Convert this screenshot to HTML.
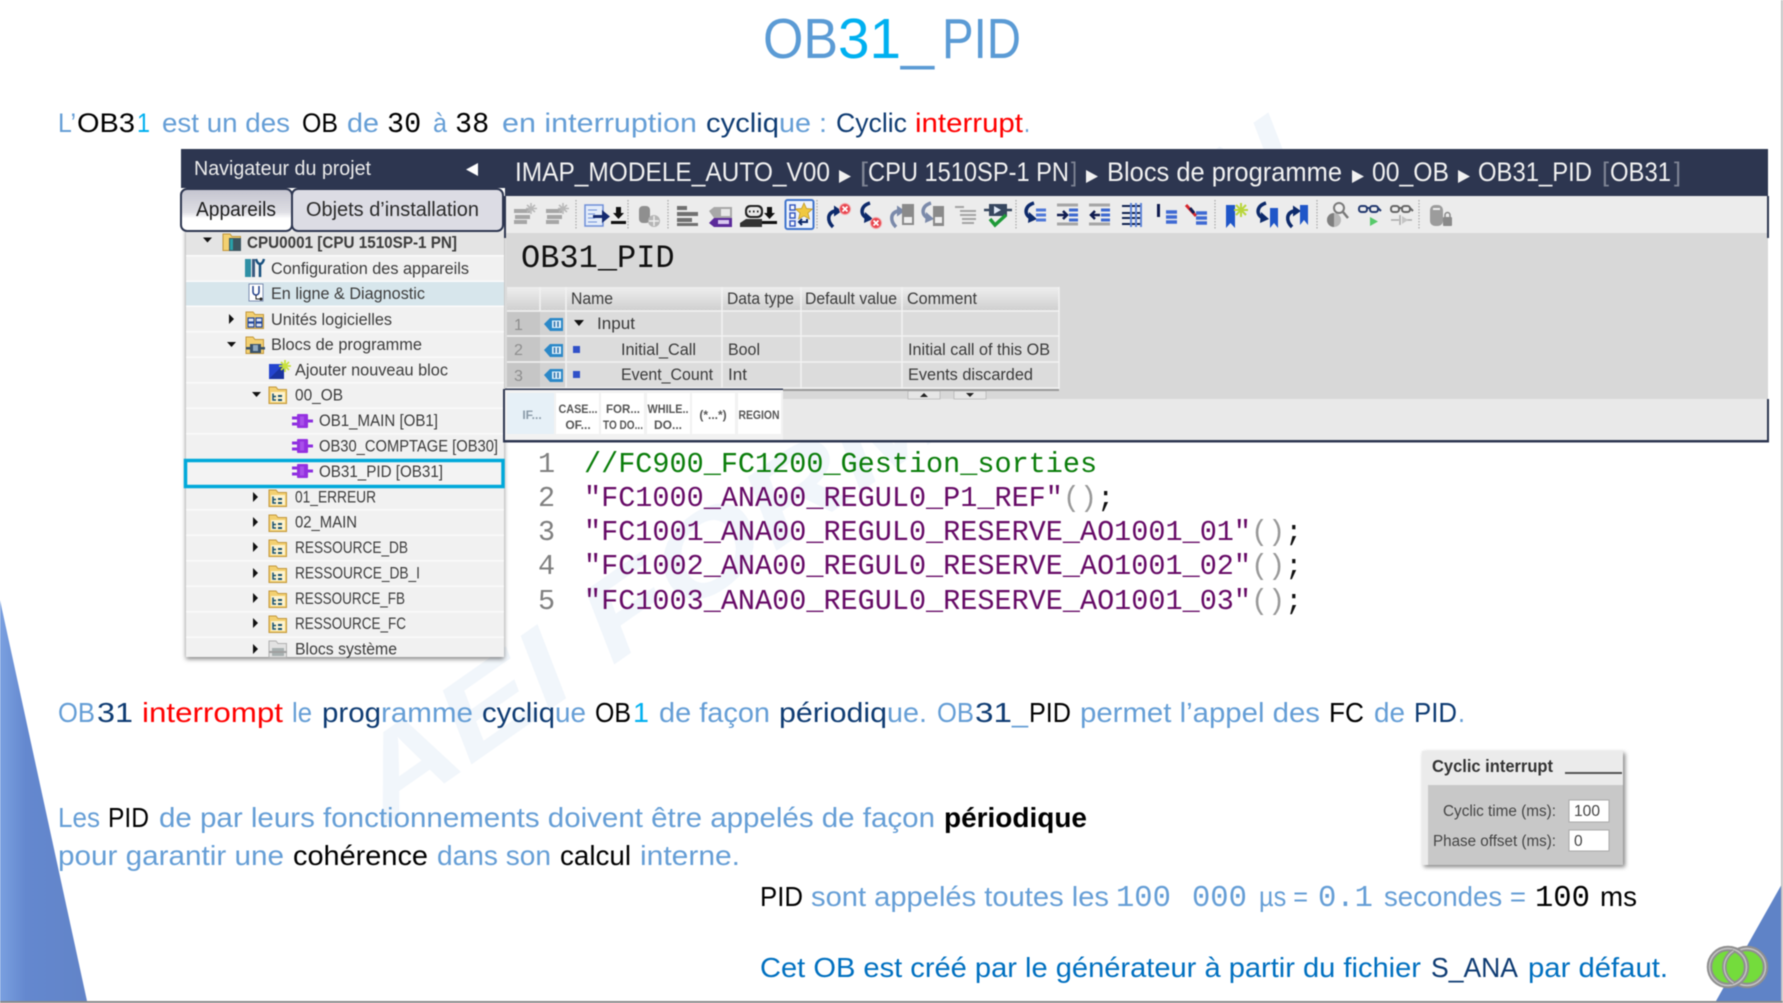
<!DOCTYPE html>
<html lang="fr"><head><meta charset="utf-8"><title>OB31_PID</title>
<style>
html,body{margin:0;padding:0;background:#fff;width:1783px;height:1003px;overflow:hidden}
svg{display:block;position:absolute;left:0;top:0;filter:blur(.45px)}
text{font-family:"Liberation Sans",sans-serif;white-space:pre}
.m{font-family:"Liberation Mono",monospace}
.b{fill:#659ed6}.d{fill:#0f3c73}.k{fill:#000}.c{fill:#00b0f0}.r{fill:#f00}.u{fill:#0070c0}
.t{font-size:17px;fill:#3c3c3c}
.h{font-size:16.5px;fill:#3a3a3a}
.sn{font-size:12px;fill:#555;font-weight:bold;text-anchor:middle}
.l1{font-size:27px}.l2{font-size:28px}
.cn{fill:#808080}.cp{fill:#660a66}.cg{fill:#999}
</style></head><body>
<svg width="1783" height="1003" viewBox="0 0 1783 1003" xmlns="http://www.w3.org/2000/svg">
<defs>
<linearGradient id="tri" x1="0" x2="1" y1="0" y2="0"><stop offset="0" stop-color="#7aa0e0"/><stop offset=".3" stop-color="#6488cf"/><stop offset="1" stop-color="#6284c8"/></linearGradient>
<linearGradient id="hd" x1="0" x2="0" y1="0" y2="1"><stop offset="0" stop-color="#eeeeee"/><stop offset="1" stop-color="#cfcfcf"/></linearGradient>
<linearGradient id="tab" x1="0" x2="0" y1="0" y2="1"><stop offset="0" stop-color="#c4c4cf"/><stop offset=".55" stop-color="#dedee4"/><stop offset=".7" stop-color="#fff"/><stop offset="1" stop-color="#fff"/></linearGradient>
<filter id="sh" x="-5%" y="-5%" width="110%" height="110%"><feDropShadow dx="0" dy="2" stdDeviation="2.500" flood-color="#000" flood-opacity=".5"/></filter>
<filter id="sh2" x="-10%" y="-10%" width="120%" height="120%"><feDropShadow dx="2" dy="2" stdDeviation="2" flood-color="#000" flood-opacity=".5"/></filter>
<g id="fold"><path d="M1 2h7l2 2.500h8.500v14H1z" fill="#f3d071" stroke="#c2973a"/><rect x="3" y="7" width="14" height="10" fill="#fdf3cf"/><path d="M5 8.500v6.500h3M5 11.500h3" stroke="#17506e" stroke-width="1.500" fill="none"/><path d="M10 10h4v2h-4zM10 14h4v2h-4z" fill="#17506e"/></g>
<g id="ob"><path d="M0 3.500h7M0 9.500h7M14 6.500h7" stroke="#8d2fe0" stroke-width="3"/><rect x="5" y="-.5" width="11" height="14" rx="1" fill="#9430e0"/><rect x="8" y="2" width="4" height="9" fill="#a850ea"/></g>
<g id="tag"><path d="M0 7l6-6h13v13H6z" fill="#2b88c8"/><rect x="8" y="3.500" width="9" height="7.500" fill="#dff0fb"/><path d="M10.500 4.500v5.500M14 4.500v5.500" stroke="#2b6ea8" stroke-width="1.500"/></g>
<g id="cr"><path d="M-1 11C-7 5-7-3 1-5" fill="none" stroke="#0d2a6b" stroke-width="3.500"/><path d="M0-10.500l8 5.500-8 5.500z" fill="#0d2a6b"/></g>
<g id="cl"><path d="M4-10C-6-7-6 2 1 5" fill="none" stroke="#0d2a6b" stroke-width="3.500"/><path d="M-1-1l8 7-9 4z" fill="#0d2a6b"/></g>
<g id="xr"><circle r="5.500" fill="#e8434c" stroke="#f3a5a8"/><path d="M-2.500-2.500l5 5M2.500-2.500l-5 5" stroke="#fff" stroke-width="1.800"/></g>
</defs>

<!-- decorative edges -->
<rect width="1783" height="1003" fill="#fff"/>
<polygon points="0,600 87,1001 0,1001" fill="url(#tri)"/>
<polygon points="1783,882 1783,1001 1716,1001" fill="#5f83c7"/>
<rect x="1781" y="0" width="2" height="1003" fill="#c4c4c4"/>
<rect x="0" y="1001" width="1783" height="2" fill="#8a8a8a"/>

<!-- watermark -->
<text transform="translate(385 825) rotate(-35)" font-size="112" font-style="italic" font-weight="bold" fill="#f1f6fb" textLength="1130" lengthAdjust="spacingAndGlyphs">AEI FORMATION</text>

<!-- title -->
<text x="763" y="58" font-size="57" fill="#5b9bd5" textLength="75" lengthAdjust="spacingAndGlyphs">OB</text>
<text x="838" y="58" font-size="57" class="c" textLength="63" lengthAdjust="spacingAndGlyphs">31</text>
<text x="901" y="58" font-size="57" fill="#5b9bd5" textLength="33" lengthAdjust="spacingAndGlyphs">_</text>
<text x="942" y="58" font-size="57" fill="#5b9bd5" textLength="79" lengthAdjust="spacingAndGlyphs">PID</text>

<!-- line 1 -->
<g class="l1">
<text x="58" y="132" class="b" textLength="18" lengthAdjust="spacingAndGlyphs">L’</text>
<text x="77" y="132" class="k" textLength="58" lengthAdjust="spacingAndGlyphs">OB3</text>
<text x="137" y="132" class="c" textLength="13" lengthAdjust="spacingAndGlyphs">1</text>
<text x="162" y="132" class="b" textLength="128" lengthAdjust="spacingAndGlyphs">est un des</text>
<text x="302" y="132" class="k" textLength="36" lengthAdjust="spacingAndGlyphs">OB</text>
<text x="347" y="132" class="b" textLength="32" lengthAdjust="spacingAndGlyphs">de</text>
<text x="387" y="132" class="m k" font-size="28.500">30</text>
<text x="433" y="132" class="b" textLength="14" lengthAdjust="spacingAndGlyphs">à</text>
<text x="455" y="132" class="m k" font-size="28.500">38</text>
<text x="502" y="132" class="b" textLength="195" lengthAdjust="spacingAndGlyphs">en interruption</text>
<text x="706" y="132" class="d" textLength="73" lengthAdjust="spacingAndGlyphs">cycliq</text>
<text x="779" y="132" class="b" textLength="48" lengthAdjust="spacingAndGlyphs">ue :</text>
<text x="836" y="132" class="d" textLength="71" lengthAdjust="spacingAndGlyphs">Cyclic</text>
<text x="915" y="132" class="r" textLength="108" lengthAdjust="spacingAndGlyphs">interrupt</text>
<text x="1024" y="132" class="b" textLength="6" lengthAdjust="spacingAndGlyphs">.</text>
</g>

<!-- navigator tree -->
<rect x="186" y="228" width="318" height="429" fill="#f1f1f1" filter="url(#sh)"/>
<rect x="186" y="231" width="318" height="24" fill="#e4e4e4"/>
<rect x="186" y="281" width="318" height="24.500" fill="#d7e6ec"/>
<g fill="#fbfbfb">
<rect x="186" y="255" width="318" height="1.500"/><rect x="186" y="280.500" width="318" height="1.500"/><rect x="186" y="305.500" width="318" height="1.500"/><rect x="186" y="331" width="318" height="1.500"/><rect x="186" y="356.500" width="318" height="1.500"/><rect x="186" y="382" width="318" height="1.500"/><rect x="186" y="407.500" width="318" height="1.500"/><rect x="186" y="433" width="318" height="1.500"/><rect x="186" y="509" width="318" height="1.500"/><rect x="186" y="534.500" width="318" height="1.500"/><rect x="186" y="560" width="318" height="1.500"/><rect x="186" y="585.500" width="318" height="1.500"/><rect x="186" y="611" width="318" height="1.500"/><rect x="186" y="636.500" width="318" height="1.500"/>
</g>
<rect x="185.500" y="460.500" width="317.500" height="26" fill="#f3f3f3" stroke="#00a9da" stroke-width="3.500"/>

<!-- tree triangles -->
<g fill="#111">
<path d="M203 237.500h9l-4.500 5z"/>
<path d="M229 314l5 5-5 5z"/><path d="M227 342h9l-4.500 5z"/>
<path d="M252 392h9l-4.500 5z"/>
<path d="M253 492l5 5-5 5z"/><path d="M253 517l5 5-5 5z"/><path d="M253 542l5 5-5 5z"/><path d="M253 568l5 5-5 5z"/><path d="M253 593l5 5-5 5z"/><path d="M253 618l5 5-5 5z"/><path d="M253 644l5 5-5 5z"/>
</g>
<!-- tree icons -->
<g transform="translate(222 232)"><path d="M1 2h7l2 2.500h8.500v14H1z" fill="#f3d071" stroke="#c2973a"/><rect x="7" y="6" width="12" height="13" fill="#3c5560"/><rect x="8" y="7" width="3" height="11" fill="#28a0a8"/></g>
<g transform="translate(245 258)"><rect x="0" y="1" width="6" height="18" fill="#2e8fa5"/><rect x="7" y="1" width="3" height="18" fill="#3a5a80"/><path d="M11 1c1 4 3 5 4 5s3-1 4-5M15 6v13" stroke="#17507e" stroke-width="2.500" fill="none"/></g>
<g transform="translate(248 284)"><rect x="1" y="0" width="14" height="17" fill="#fff" stroke="#7a8cb0"/><path d="M5 2v6a3 3 0 006 0V2" stroke="#223f8a" stroke-width="1.500" fill="none"/><path d="M8 11v4h5" stroke="#222" fill="none"/><circle cx="13" cy="15" r="1.500" fill="#222"/></g>
<g transform="translate(245 310)"><path d="M1 2h7l2 2.500h8.500v14H1z" fill="#f3d071" stroke="#c2973a"/><path d="M3 8h6v4H3zM11 8h6v4h-6zM3 13h6v4H3zM11 13h6v4h-6z" fill="#dfe6f5" stroke="#23489c" stroke-width="1.200"/></g>
<g transform="translate(245 335)"><path d="M1 2h7l2 2.500h8.500v14H1z" fill="#f3d071" stroke="#c2973a"/><rect x="5" y="9" width="11" height="9" fill="#39526a"/><rect x="1" y="12" width="19" height="2.500" fill="#39526a"/><rect x="8" y="10" width="5" height="6" fill="#8fa9bf"/></g>
<g transform="translate(269 360)"><rect x="0" y="4" width="15" height="15" fill="#2444cf"/><path d="M0 19L15 4v15z" fill="#1a33a0"/><path d="M16 0v12M10 6h12M12 2l8 8M20 2l-8 8" stroke="#c9e23c" stroke-width="1.800"/></g>
<use href="#fold" x="268" y="385"/>
<use href="#ob" x="292" y="414.500"/><use href="#ob" x="292" y="439.500"/><use href="#ob" x="292" y="464.500"/>
<use href="#fold" x="268" y="488"/><use href="#fold" x="268" y="513"/><use href="#fold" x="268" y="538"/><use href="#fold" x="268" y="564"/><use href="#fold" x="268" y="589"/><use href="#fold" x="268" y="614"/>
<g transform="translate(268 639)"><path d="M1 2h7l2 2.500h8.500v14H1z" fill="#e2e2e2" stroke="#b0b0b0"/><rect x="4" y="9" width="12" height="8" fill="#a8b0b0"/><rect x="1" y="12" width="18" height="2" fill="#a0a0a0"/></g>

<!-- tree text -->
<text x="247" y="248" class="t" font-weight="bold" textLength="210" lengthAdjust="spacingAndGlyphs" style="font-size:16.5px">CPU0001 [CPU 1510SP-1 PN]</text>
<text x="271" y="274" class="t" textLength="198" lengthAdjust="spacingAndGlyphs">Configuration des appareils</text>
<text x="271" y="299" class="t" textLength="154" lengthAdjust="spacingAndGlyphs">En ligne &amp; Diagnostic</text>
<text x="271" y="325" class="t" textLength="121" lengthAdjust="spacingAndGlyphs">Unités logicielles</text>
<text x="271" y="350" class="t" textLength="151" lengthAdjust="spacingAndGlyphs">Blocs de programme</text>
<text x="295" y="375.500" class="t" textLength="153" lengthAdjust="spacingAndGlyphs">Ajouter nouveau bloc</text>
<text x="295" y="400.500" class="t" textLength="48" lengthAdjust="spacingAndGlyphs">00_OB</text>
<text x="319" y="426" class="t" textLength="119" lengthAdjust="spacingAndGlyphs">OB1_MAIN [OB1]</text>
<text x="319" y="451.500" class="t" textLength="179" lengthAdjust="spacingAndGlyphs">OB30_COMPTAGE [OB30]</text>
<text x="319" y="477" class="t" textLength="124" lengthAdjust="spacingAndGlyphs">OB31_PID [OB31]</text>
<text x="295" y="502.500" class="t" textLength="81" lengthAdjust="spacingAndGlyphs">01_ERREUR</text>
<text x="295" y="527.500" class="t" textLength="62" lengthAdjust="spacingAndGlyphs">02_MAIN</text>
<text x="295" y="553" class="t" textLength="113" lengthAdjust="spacingAndGlyphs">RESSOURCE_DB</text>
<text x="295" y="578.500" class="t" textLength="125" lengthAdjust="spacingAndGlyphs">RESSOURCE_DB_I</text>
<text x="295" y="604" class="t" textLength="110" lengthAdjust="spacingAndGlyphs">RESSOURCE_FB</text>
<text x="295" y="629" class="t" textLength="111" lengthAdjust="spacingAndGlyphs">RESSOURCE_FC</text>
<text x="295" y="654.500" class="t" textLength="102" lengthAdjust="spacingAndGlyphs">Blocs système</text>

<!-- top header bar -->
<rect x="181" y="149" width="1587" height="39" fill="#2d3650"/>
<rect x="505" y="188" width="1263" height="8" fill="#2d3650"/>
<text x="194" y="175" font-size="20" fill="#ececec" textLength="177" lengthAdjust="spacingAndGlyphs">Navigateur du projet</text>
<path d="M478 163v13l-12-6.500z" fill="#fff"/>
<rect x="181" y="189" width="111" height="42" rx="6" fill="url(#tab)" stroke="#2d3650" stroke-width="2"/>
<rect x="292" y="189" width="211" height="42" rx="6" fill="#dcdce4" stroke="#2d3650" stroke-width="2"/>
<text x="196" y="216" font-size="20" fill="#1c1c1c" textLength="80" lengthAdjust="spacingAndGlyphs">Appareils</text>
<text x="306" y="216" font-size="20" fill="#2a2a2a" textLength="173" lengthAdjust="spacingAndGlyphs">Objets d’installation</text>

<!-- breadcrumb -->
<g font-size="27" fill="#f1f1f1">
<text x="515" y="181" textLength="315" lengthAdjust="spacingAndGlyphs">IMAP_MODELE_AUTO_V00</text>
<path d="M839 170l12 6.500-12 6.500z"/>
<text x="860" y="181" fill="#7e8494" textLength="8" lengthAdjust="spacingAndGlyphs">[</text>
<text x="868" y="181" textLength="201" lengthAdjust="spacingAndGlyphs">CPU 1510SP-1 PN</text>
<text x="1071" y="181" fill="#7e8494" textLength="6" lengthAdjust="spacingAndGlyphs">]</text>
<path d="M1086 170l12 6.500-12 6.500z"/>
<text x="1107" y="181" textLength="235" lengthAdjust="spacingAndGlyphs">Blocs de programme</text>
<path d="M1352 170l12 6.500-12 6.500z"/>
<text x="1372" y="181" textLength="77" lengthAdjust="spacingAndGlyphs">00_OB</text>
<path d="M1458 170l12 6.500-12 6.500z"/>
<text x="1478" y="181" textLength="114" lengthAdjust="spacingAndGlyphs">OB31_PID</text>
<text x="1602" y="181" fill="#7e8494" textLength="7" lengthAdjust="spacingAndGlyphs">[</text>
<text x="1610" y="181" textLength="61" lengthAdjust="spacingAndGlyphs">OB31</text>
<text x="1674" y="181" fill="#7e8494" textLength="7" lengthAdjust="spacingAndGlyphs">]</text>
</g>

<!-- editor panes -->
<rect x="505" y="196" width="1263" height="37" fill="#ececec"/>
<rect x="506" y="233" width="1262" height="166" fill="#d8d8d8"/>
<rect x="505" y="399" width="1263" height="42" fill="#e9e9e9"/>
<rect x="504" y="196" width="2" height="42" fill="#2d3650"/><rect x="1767" y="196" width="2" height="42" fill="#2d3650"/>
<rect x="503" y="389" width="2" height="53" fill="#2d3650"/><rect x="1767" y="399" width="2" height="43" fill="#2d3650"/>
<rect x="503" y="440" width="1266" height="2.500" fill="#2d3650"/>

<!-- toolbar separators -->
<g stroke="#a9a9a9" stroke-dasharray="1.500 1.500" stroke-width="1.200">
<path d="M576 200v30M628 200v30M668 200v30M817 200v30M1016 200v30M1215 200v30M1317 200v30M1419 200v30"/>
</g>

<!-- toolbar icons -->
<g>
<g fill="#a6a6a6"><rect x="514" y="209" width="16" height="4"/><rect x="515" y="215" width="15" height="4"/><rect x="514" y="220" width="13" height="4"/>
<rect x="546" y="209" width="16" height="4"/><rect x="547" y="215" width="15" height="4"/><rect x="546" y="220" width="13" height="4"/></g>
<path d="M531 203v11M526 208.500h11M527 205l8 7M535 205l-8 7M563 203v11M558 208.500h11M559 205l8 7M567 205l-8 7" stroke="#b8b8b8" stroke-width="1.500"/>
<rect x="585" y="205" width="18" height="21" fill="#e3ecfa" stroke="#6f8fd8" stroke-width="1.500"/>
<path d="M588 210h9M588 214h7M588 218h7M588 222h9" stroke="#6f8fd8"/>
<path d="M593 215h9v-5l8 6.500-8 6.500v-5h-9z" fill="#152a70"/>
<path d="M616 207h5v6h3l-5.500 6-5.500-6h3zM611 221h15v3h-15z" fill="#111"/>
<rect x="639" y="206" width="11" height="17" rx="4" fill="#8f8f8f"/>
<circle cx="654" cy="221" r="6" fill="#b5b5b5"/><path d="M654 216v10M649 221h10" stroke="#eee" stroke-width="1.500"/>
<g fill="#707070"><rect x="677" y="206" width="10" height="4"/><rect x="677" y="212" width="21" height="4"/><rect x="677" y="218" width="15" height="4"/><rect x="677" y="223" width="21" height="3"/></g>
<path d="M709 211l5-4h18v11h-18z" fill="#a8a8a8"/><rect x="721" y="209" width="9" height="7" fill="#e8e8e8"/>
<path d="M709 223l5-5h18v9h-18z" fill="#5b2a9a"/><rect x="718" y="220" width="11" height="4" fill="#d8c8f0"/>
<rect x="745" y="205" width="18" height="13" rx="5" fill="#222"/><rect x="747" y="207" width="14" height="9" rx="4" fill="#e8e8e8"/><path d="M749 211.500h1.500M753 211.500h1.500M757 211.500h1.500" stroke="#222" stroke-width="2"/>
<path d="M740 223l6-4h16v8h-22z" fill="#333"/>
<path d="M767 207h5v6h3l-5.500 6-5.500-6h3zM762 221h15v3h-15z" fill="#111"/>
<rect x="785.500" y="200" width="28" height="29" rx="2" fill="#eef3fc" stroke="#3f74cc" stroke-width="2"/>
<path d="M790 205h5v5h-5zM790 213h5v5h-5zM790 221h5v5h-5z" fill="#fff" stroke="#3458c0" stroke-width="1.500"/>
<path d="M804 203l2.500 5.500 6 .5-4.500 4 1.500 6-5.500-3-5.500 3 1.500-6-4.500-4 6-.5z" fill="#f0c840" stroke="#b89020" stroke-width=".7"/>
<path d="M807 219v3h-8M802 219l-3 3 3 3" stroke="#0d2a6b" stroke-width="2" fill="none"/>
<use href="#cr" transform="translate(834 216)"/><use href="#xr" transform="translate(845 209)"/>
<use href="#cl" transform="translate(866 213)"/><use href="#xr" transform="translate(876 223)"/>
<g opacity=".5"><use href="#cr" transform="translate(897 216)"/></g><rect x="902" y="204" width="12" height="21" fill="#8a8a8a"/><rect x="904" y="217" width="8" height="6" fill="#eee"/>
<g opacity=".5"><use href="#cl" transform="translate(927 213)"/></g><rect x="933" y="206" width="11" height="20" fill="#8a8a8a"/><rect x="935" y="217" width="7" height="6" fill="#eee"/>
<path d="M955 207h9M960 211h16M960 215h16M962 219h14M962 223h12" stroke="#a4a4a4" stroke-width="2"/>
<rect x="989" y="204" width="18" height="12" fill="#36465e"/><path d="M984 210h5M1007 210h5" stroke="#36465e" stroke-width="2.500"/><path d="M994 206l7 4-7 4z" fill="#dfe8f5"/>
<path d="M990 219l5 6 11-10" stroke="#1e9a38" stroke-width="3.500" fill="none"/>
<use href="#cl" transform="translate(1030 213)"/><path d="M1036 210h10M1036 215h10M1036 220h10" stroke="#4f78d8" stroke-width="3"/>
<g stroke="#a6a6a6" stroke-width="3"><path d="M1057 205h21M1057 224h21"/></g><path d="M1057 215h9M1063 211l4 4-4 4" stroke="#101c50" stroke-width="2.500" fill="none"/><path d="M1069 210h9M1069 215h9M1069 220h9" stroke="#3d68d0" stroke-width="3"/>
<g stroke="#a6a6a6" stroke-width="3"><path d="M1089 205h21M1089 224h21"/></g><path d="M1100 215h-9M1095 211l-4 4 4 4" stroke="#101c50" stroke-width="2.500" fill="none"/><path d="M1101 210h9M1101 215h9M1101 220h9" stroke="#3d68d0" stroke-width="3"/>
<path d="M1122 206h20M1122 213h20M1122 218h20M1122 224h20" stroke="#11224f" stroke-width="2"/><path d="M1131 203v24M1136 203v24M1141 203v24" stroke="#5f85d8" stroke-width="2"/>
<rect x="1157" y="204" width="3" height="13" fill="#101c50"/><path d="M1166 212h11M1166 217h11M1166 222h11" stroke="#3f6ad3" stroke-width="3.500"/>
<path d="M1186 205l10 11" stroke="#d8252c" stroke-width="3"/><path d="M1190 208l4 5" stroke="#101c50" stroke-width="3"/><path d="M1196 213h11M1196 218h11M1196 223h11" stroke="#3f6ad3" stroke-width="3.500"/>
<path d="M1226 205h9v23l-4.500-5-4.500 5z" fill="#1f56c8"/><path d="M1241 203v14M1234 210h14M1236 205l10 10M1246 205l-10 10" stroke="#b9d63a" stroke-width="2"/>
<use href="#cl" transform="translate(1262 213)"/><path d="M1270 208h8v20l-4-5-4 5z" fill="#1f56c8"/>
<use href="#cr" transform="translate(1293 216)"/><path d="M1300 205h8v20l-4-5-4 5z" fill="#1f56c8"/>
<circle cx="1334" cy="220" r="7" fill="#b8b8b8"/><path d="M1334 213a7 7 0 000 14z" fill="#7f7f7f"/><circle cx="1339" cy="208" r="5" fill="#eee" stroke="#7a7a7a" stroke-width="2"/><path d="M1343 212l5 6" stroke="#7a7a7a" stroke-width="2.500"/>
<g fill="none" stroke="#22386e" stroke-width="2"><rect x="1359" y="206" width="8" height="6" rx="2.500"/><rect x="1370" y="206" width="8" height="6" rx="2.500"/><path d="M1367 208h3M1378 208l3 3"/></g><path d="M1370 217v9l8-4.500z" fill="#57c96a"/>
<g fill="none" stroke="#666" stroke-width="2"><rect x="1391" y="206" width="8" height="6" rx="2.500"/><rect x="1402" y="206" width="8" height="6" rx="2.500"/><path d="M1399 208h3M1410 208l3 3"/></g><path d="M1391 220h8M1404 220h8M1400 215v10" stroke="#aaa" stroke-width="1.500"/><path d="M1402 216v8l6-4z" fill="#c4c4c4"/>
<rect x="1430" y="205" width="13" height="21" rx="5" fill="#9c9c9c"/><rect x="1433" y="208" width="7" height="2" fill="#eee"/><rect x="1443" y="217" width="9" height="9" rx="1" fill="#8a8a8a"/><path d="M1445 217v-2a2.500 2.500 0 015 0v2" fill="none" stroke="#8a8a8a" stroke-width="1.500"/>
</g>

<!-- OB title -->
<text x="521" y="267" class="m" font-size="32" fill="#111">OB31_PID</text>

<!-- table -->
<rect x="507" y="287" width="552" height="24" fill="url(#hd)"/>
<rect x="507" y="311" width="552" height="79" fill="#dcdcdc"/>
<rect x="507" y="311" width="33" height="79" fill="#c6c6c6"/>
<rect x="540" y="311" width="26" height="79" fill="#d2d2d2"/>
<g stroke="#f2f2f2" stroke-width="1.500"><path d="M507 311h552M507 336h552M507 362h552M507 388h552M722 287v102M801 287v102M902 287v102M566 287v102M540 287v24M1059 287v102"/></g>
<rect x="507" y="389" width="552" height="2" fill="#9a9a9a"/>
<text x="571" y="304" class="h" textLength="42" lengthAdjust="spacingAndGlyphs">Name</text>
<text x="727" y="304" class="h" textLength="67" lengthAdjust="spacingAndGlyphs">Data type</text>
<text x="805" y="304" class="h" textLength="92" lengthAdjust="spacingAndGlyphs">Default value</text>
<text x="907" y="304" class="h" textLength="70" lengthAdjust="spacingAndGlyphs">Comment</text>
<g font-size="16" fill="#8e8e8e"><text x="514" y="330">1</text><text x="514" y="355">2</text><text x="514" y="381">3</text></g>
<use href="#tag" x="544" y="317"/><use href="#tag" x="544" y="343"/><use href="#tag" x="544" y="368"/>
<path d="M574 320h10l-5 6z" fill="#111"/>
<rect x="573" y="346" width="7" height="7" fill="#3050c8"/><rect x="573" y="371" width="7" height="7" fill="#3050c8"/>
<text x="597" y="329" class="h" textLength="38" lengthAdjust="spacingAndGlyphs">Input</text>
<text x="621" y="355" class="h" textLength="75" lengthAdjust="spacingAndGlyphs">Initial_Call</text>
<text x="728" y="355" class="h" textLength="32" lengthAdjust="spacingAndGlyphs">Bool</text>
<text x="908" y="355" class="h" textLength="142" lengthAdjust="spacingAndGlyphs">Initial call of this OB</text>
<text x="621" y="380" class="h" textLength="92" lengthAdjust="spacingAndGlyphs">Event_Count</text>
<text x="728" y="380" class="h" textLength="19" lengthAdjust="spacingAndGlyphs">Int</text>
<text x="908" y="380" class="h" textLength="125" lengthAdjust="spacingAndGlyphs">Events discarded</text>
<rect x="908" y="391" width="32" height="8" fill="#e6e6e6" stroke="#aaa" stroke-width=".6"/><rect x="954" y="391" width="32" height="8" fill="#e6e6e6" stroke="#aaa" stroke-width=".6"/>
<path d="M920 397h8l-4-4zM966 393h8l-4 4z" fill="#222"/>

<!-- snippet bar -->
<rect x="505" y="389" width="278" height="51" fill="#f2f2f2"/>
<rect x="505" y="388.500" width="278" height="1.500" fill="#2d3650"/>
<rect x="507" y="393" width="47" height="41" fill="#e6f0f7"/>
<g fill="#fff"><rect x="556" y="393" width="43" height="41"/><rect x="601" y="393" width="43" height="41"/><rect x="647" y="393" width="43" height="41"/><rect x="692" y="393" width="43" height="41"/><rect x="738" y="393" width="43" height="41"/></g>
<text x="532" y="419" class="sn" style="fill:#8a9aa8">IF...</text>
<text x="578" y="413" class="sn" textLength="39" lengthAdjust="spacingAndGlyphs">CASE...</text><text x="578" y="429" class="sn">OF...</text>
<text x="623" y="413" class="sn" textLength="34" lengthAdjust="spacingAndGlyphs">FOR...</text><text x="623" y="429" class="sn" textLength="40" lengthAdjust="spacingAndGlyphs">TO DO...</text>
<text x="668" y="413" class="sn" textLength="41" lengthAdjust="spacingAndGlyphs">WHILE..</text><text x="668" y="429" class="sn">DO...</text>
<text x="713" y="419" class="sn">(*...*)</text>
<text x="759" y="419" class="sn" textLength="41" lengthAdjust="spacingAndGlyphs">REGION</text>

<!-- code -->
<text x="538" y="472" class="m cn" font-size="28.500">1</text>
<text x="538" y="506" class="m cn" font-size="28.500">2</text>
<text x="538" y="540" class="m cn" font-size="28.500">3</text>
<text x="538" y="574" class="m cn" font-size="28.500">4</text>
<text x="538" y="609" class="m cn" font-size="28.500">5</text>
<text x="584" y="472" class="m" font-size="28.500" fill="#0a7d0a">//FC900_FC1200_Gestion_sorties</text>
<text x="584" y="506" class="m" font-size="28.500"><tspan class="cp">"FC1000_ANA00_REGUL0_P1_REF"</tspan><tspan class="cg">()</tspan><tspan fill="#111">;</tspan></text>
<text x="584" y="540" class="m" font-size="28.500"><tspan class="cp">"FC1001_ANA00_REGUL0_RESERVE_AO1001_01"</tspan><tspan class="cg">()</tspan><tspan fill="#111">;</tspan></text>
<text x="584" y="574" class="m" font-size="28.500"><tspan class="cp">"FC1002_ANA00_REGUL0_RESERVE_AO1001_02"</tspan><tspan class="cg">()</tspan><tspan fill="#111">;</tspan></text>
<text x="584" y="609" class="m" font-size="28.500"><tspan class="cp">"FC1003_ANA00_REGUL0_RESERVE_AO1001_03"</tspan><tspan class="cg">()</tspan><tspan fill="#111">;</tspan></text>

<!-- paragraph lines -->
<g class="l2">
<text x="58" y="722" class="b" textLength="37" lengthAdjust="spacingAndGlyphs">OB</text>
<text x="97" y="722" class="d" textLength="36" lengthAdjust="spacingAndGlyphs">31</text>
<text x="142" y="722" class="r" textLength="141" lengthAdjust="spacingAndGlyphs">interrompt</text>
<text x="292" y="722" class="b" textLength="20" lengthAdjust="spacingAndGlyphs">le</text>
<text x="322" y="722" class="d" textLength="59" lengthAdjust="spacingAndGlyphs">prog</text>
<text x="381" y="722" class="b" textLength="92" lengthAdjust="spacingAndGlyphs">ramme</text>
<text x="482" y="722" class="d" textLength="73" lengthAdjust="spacingAndGlyphs">cycliq</text>
<text x="555" y="722" class="b" textLength="31" lengthAdjust="spacingAndGlyphs">ue</text>
<text x="595" y="722" class="k" textLength="36" lengthAdjust="spacingAndGlyphs">OB</text>
<text x="633" y="722" class="c" textLength="16" lengthAdjust="spacingAndGlyphs">1</text>
<text x="659" y="722" class="b" textLength="111" lengthAdjust="spacingAndGlyphs">de façon</text>
<text x="779" y="722" class="d" textLength="108" lengthAdjust="spacingAndGlyphs">périodiq</text>
<text x="887" y="722" class="b" textLength="40" lengthAdjust="spacingAndGlyphs">ue.</text>
<text x="937" y="722" class="b" textLength="37" lengthAdjust="spacingAndGlyphs">OB</text>
<text x="975" y="722" class="d" textLength="37" lengthAdjust="spacingAndGlyphs">31</text>
<text x="1012" y="722" class="b" textLength="16" lengthAdjust="spacingAndGlyphs">_</text>
<text x="1029" y="722" class="k" textLength="42" lengthAdjust="spacingAndGlyphs">PID</text>
<text x="1080" y="722" class="b" textLength="240" lengthAdjust="spacingAndGlyphs">permet l’appel des</text>
<text x="1329" y="722" class="k" textLength="35" lengthAdjust="spacingAndGlyphs">FC</text>
<text x="1374" y="722" class="b" textLength="31" lengthAdjust="spacingAndGlyphs">de</text>
<text x="1414" y="722" class="d" textLength="43" lengthAdjust="spacingAndGlyphs">PID</text>
<text x="1458" y="722" class="b" textLength="7" lengthAdjust="spacingAndGlyphs">.</text>

<text x="58" y="827" class="b" textLength="42" lengthAdjust="spacingAndGlyphs">Les</text>
<text x="108" y="827" class="k" textLength="41" lengthAdjust="spacingAndGlyphs">PID</text>
<text x="159" y="827" class="b" textLength="776" lengthAdjust="spacingAndGlyphs">de par leurs fonctionnements doivent être appelés de façon</text>
<text x="944" y="827" class="k" font-weight="bold" textLength="143" lengthAdjust="spacingAndGlyphs">périodique</text>

<text x="58" y="865" class="b" textLength="226" lengthAdjust="spacingAndGlyphs">pour garantir une</text>
<text x="293" y="865" class="k" textLength="135" lengthAdjust="spacingAndGlyphs">cohérence</text>
<text x="437" y="865" class="b" textLength="114" lengthAdjust="spacingAndGlyphs">dans son</text>
<text x="560" y="865" class="k" textLength="71" lengthAdjust="spacingAndGlyphs">calcul</text>
<text x="640" y="865" class="b" textLength="100" lengthAdjust="spacingAndGlyphs">interne.</text>

<text x="760" y="906" class="k" textLength="43" lengthAdjust="spacingAndGlyphs">PID</text>
<text x="811" y="906" class="b" textLength="298" lengthAdjust="spacingAndGlyphs">sont appelés toutes les</text>
<text x="1116" y="906" class="m b" font-size="30.500">100</text>
<text x="1192" y="906" class="m b" font-size="30.500">000</text>
<text x="1259" y="906" class="b" textLength="49" lengthAdjust="spacingAndGlyphs">µs =</text>
<text x="1318" y="906" class="m b" font-size="30.500">0.1</text>
<text x="1384" y="906" class="b" textLength="142" lengthAdjust="spacingAndGlyphs">secondes =</text>
<text x="1535" y="906" class="m k" font-size="30.500">100</text>
<text x="1600" y="906" class="k" textLength="37" lengthAdjust="spacingAndGlyphs">ms</text>

<text x="760" y="977" class="u" textLength="661" lengthAdjust="spacingAndGlyphs">Cet OB est créé par le générateur à partir du fichier</text>
<text x="1431" y="977" class="d" textLength="87" lengthAdjust="spacingAndGlyphs">S_ANA</text>
<text x="1528" y="977" class="u" textLength="140" lengthAdjust="spacingAndGlyphs">par défaut.</text>
</g>

<!-- cyclic interrupt -->
<rect x="1422" y="751" width="201" height="114" fill="#ebebeb" filter="url(#sh2)"/>
<rect x="1428" y="785" width="195" height="80" fill="#c8c8c8"/>
<text x="1432" y="772" font-size="17.500" font-weight="bold" fill="#333" textLength="121" lengthAdjust="spacingAndGlyphs">Cyclic interrupt</text>
<rect x="1565" y="772" width="57" height="2" fill="#555"/>
<text x="1443" y="816" font-size="15.500" fill="#444" textLength="113" lengthAdjust="spacingAndGlyphs">Cyclic time (ms):</text>
<text x="1433" y="846" font-size="15.500" fill="#444" textLength="123" lengthAdjust="spacingAndGlyphs">Phase offset (ms):</text>
<rect x="1569" y="800" width="40" height="22" fill="#fff" stroke="#aaa"/>
<rect x="1569" y="830" width="40" height="21" fill="#fff" stroke="#aaa"/>
<text x="1574" y="816" font-size="15.500" fill="#444" textLength="26" lengthAdjust="spacingAndGlyphs">100</text>
<text x="1574" y="846" font-size="15.500" fill="#444">0</text>

<!-- logo -->
<circle cx="1747" cy="967" r="18.500" fill="#74dc3c" stroke="#8f8f8f" stroke-width="5.500"/>
<circle cx="1747" cy="967" r="18.500" fill="none" stroke="#c4c4c4" stroke-width="1.500"/>
<circle cx="1728" cy="967" r="18.500" fill="#74dc3c" stroke="#8f8f8f" stroke-width="5.500"/>
<circle cx="1728" cy="967" r="18.500" fill="none" stroke="#c4c4c4" stroke-width="1.500"/>
<path d="M1733.500 951a18.500 18.500 0 000 32" fill="none" stroke="#8f8f8f" stroke-width="4.500"/>
<path d="M1733.500 951a18.500 18.500 0 000 32" fill="none" stroke="#c4c4c4" stroke-width="1.300"/>
</svg>
</body></html>
